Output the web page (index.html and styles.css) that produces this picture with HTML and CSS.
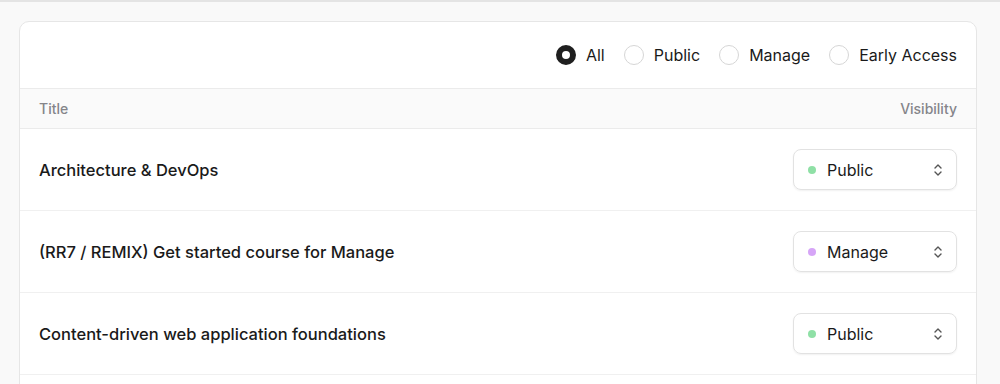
FILE: index.html
```html
<!DOCTYPE html>
<html lang="en">
<head>
    <meta charset="UTF-8">
    <meta name="viewport" content="width=device-width, initial-scale=1.0">
    <title>Courses</title>
    <link rel="stylesheet" href="styles.css">
</head>
<body>
    <div class="topbar"></div>
    <div class="page">
        <div class="card">
            <div class="filters">
                <label class="radio"><input type="radio" name="vis" checked><span>All</span></label>
                <label class="radio"><input type="radio" name="vis"><span>Public</span></label>
                <label class="radio"><input type="radio" name="vis"><span>Manage</span></label>
                <label class="radio"><input type="radio" name="vis"><span>Early Access</span></label>
            </div>
            <div class="table-head">
                <span>Title</span>
                <span>Visibility</span>
            </div>
            <div class="row">
                <div class="title">Architecture &amp; DevOps</div>
                <div class="select">
                    <span class="dot public"></span>
                    <span class="select-label">Public</span>
                    <svg class="chevrons" width="10" height="16" viewBox="0 0 10 16"><path d="M2 6 L5 3 L8 6 M2 10 L5 13 L8 10" fill="none" stroke="#555" stroke-width="1.4" stroke-linecap="round" stroke-linejoin="round"/></svg>
                </div>
            </div>
            <div class="row">
                <div class="title">(RR7 / REMIX) Get started course for Manage</div>
                <div class="select">
                    <span class="dot manage"></span>
                    <span class="select-label">Manage</span>
                    <svg class="chevrons" width="10" height="16" viewBox="0 0 10 16"><path d="M2 6 L5 3 L8 6 M2 10 L5 13 L8 10" fill="none" stroke="#555" stroke-width="1.4" stroke-linecap="round" stroke-linejoin="round"/></svg>
                </div>
            </div>
            <div class="row">
                <div class="title">Content-driven web application foundations</div>
                <div class="select">
                    <span class="dot public"></span>
                    <span class="select-label">Public</span>
                    <svg class="chevrons" width="10" height="16" viewBox="0 0 10 16"><path d="M2 6 L5 3 L8 6 M2 10 L5 13 L8 10" fill="none" stroke="#555" stroke-width="1.4" stroke-linecap="round" stroke-linejoin="round"/></svg>
                </div>
            </div>
            <div class="row">
                <div class="title">&nbsp;</div>
            </div>
        </div>
    </div>
</body>
</html>
```

FILE: styles.css
```css
body {
    font-family: Inter, "Noto Sans", sans-serif;
    background-color: #f9f9f9;
    margin: 0;
    color: #1a1a1a;
    overflow: hidden;
}
.topbar {
    height: 2px;
    background-color: #e4e4e4;
}
.page {
    padding: 19px 23px 0 19px;
}
.card {
    background-color: white;
    border: 1px solid #e6e6e6;
    border-radius: 10px;
    overflow: hidden;
}
.filters {
    display: flex;
    justify-content: flex-end;
    align-items: center;
    gap: 19px;
    height: 66px;
    padding: 0 19px;
    border-bottom: 1px solid #ebebeb;
}
.radio {
    display: flex;
    align-items: center;
    gap: 10px;
    font-size: 16px;
}
.radio input {
    appearance: none;
    margin: 0;
    width: 20px;
    height: 20px;
    border-radius: 50%;
    border: 1px solid #d6d6d6;
    background: white;
    box-sizing: border-box;
}
.radio input:checked {
    border: 6px solid #1f1f1f;
}
.table-head {
    display: flex;
    justify-content: space-between;
    align-items: center;
    height: 39px;
    padding: 0 19px;
    background-color: #fafafa;
    border-bottom: 1px solid #ebebeb;
    font-size: 14px;
    font-weight: 500;
    color: #85858a;
}
.row {
    display: flex;
    justify-content: space-between;
    align-items: center;
    height: 82px;
    box-sizing: border-box;
    padding: 0 19px;
    border-bottom: 1px solid #f0f0f0;
}
.title {
    font-size: 16.5px;
    font-weight: 500;
}
.select {
    display: flex;
    align-items: center;
    width: 164px;
    height: 41px;
    box-sizing: border-box;
    padding: 0 13px 0 14px;
    border: 1px solid #e2e2e2;
    border-radius: 8px;
    box-shadow: 0 1px 2px rgba(0, 0, 0, 0.06);
    font-size: 16px;
}
.dot {
    width: 8px;
    height: 8px;
    border-radius: 50%;
    margin-right: 11px;
}
.dot.public {
    background-color: #8fe0a6;
}
.dot.manage {
    background-color: #d6a5f7;
}
.select-label {
    flex: 1;
}
```
